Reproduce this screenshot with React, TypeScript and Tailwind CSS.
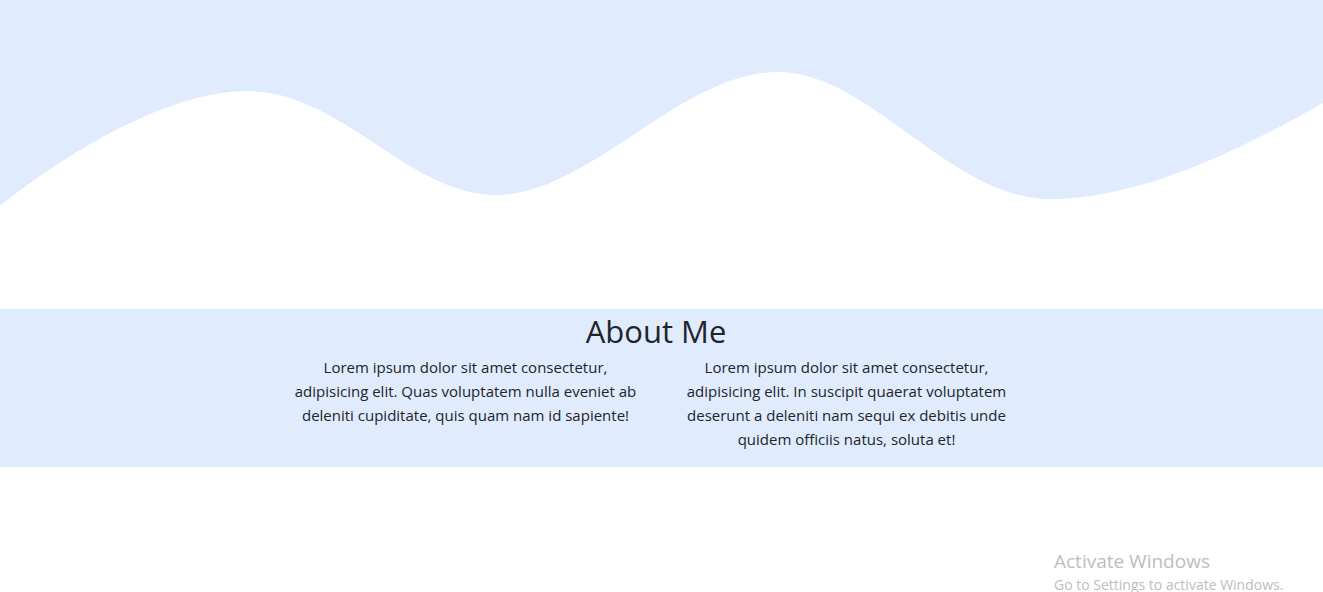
import React from "react";

const columns = [
  "Lorem ipsum dolor sit amet consectetur, adipisicing elit. Quas voluptatem nulla eveniet ab deleniti cupiditate, quis quam nam id sapiente!",
  "Lorem ipsum dolor sit amet consectetur, adipisicing elit. In suscipit quaerat voluptatem deserunt a deleniti nam sequi ex debitis unde quidem officiis natus, soluta et!",
];

const Wave = () => (
  <svg
    className="block w-full h-[309px]"
    viewBox="0 0 1323 309"
    preserveAspectRatio="none"
  >
    <path
      fill="#e0ebfe"
      d="M0,206 C70,150 170,91 248,91 C340,91 410,195 496,195 C590,195 680,72 778,72 C870,72 950,199 1050,199 C1140,199 1240,150 1323,103 L1323,0 L0,0 Z"
    />
  </svg>
);

const App = () => {
  return (
    <div className="relative min-h-[592px] bg-white font-['Open_Sans',sans-serif] text-[#212529] overflow-hidden">
      <Wave />
      <section className="bg-[#e0ebfe] pr-[11px]">
        <h2 className="text-center text-[31px] leading-[38px] font-normal pt-[3px] mb-[5px]">
          About Me
        </h2>
        <div className="flex justify-center gap-[25px] pb-4">
          {columns.map((text, i) => (
            <p
              key={i}
              className="w-[356px] text-center text-[15px] leading-6"
            >
              {text}
            </p>
          ))}
        </div>
      </section>
      <div className="absolute left-[1054px] top-[550px] text-[#bdbdbd] leading-tight">
        <div className="text-[19px]">Activate Windows</div>
        <div className="text-[14px] mt-[2px]">
          Go to Settings to activate Windows.
        </div>
      </div>
    </div>
  );
};

export default App;
